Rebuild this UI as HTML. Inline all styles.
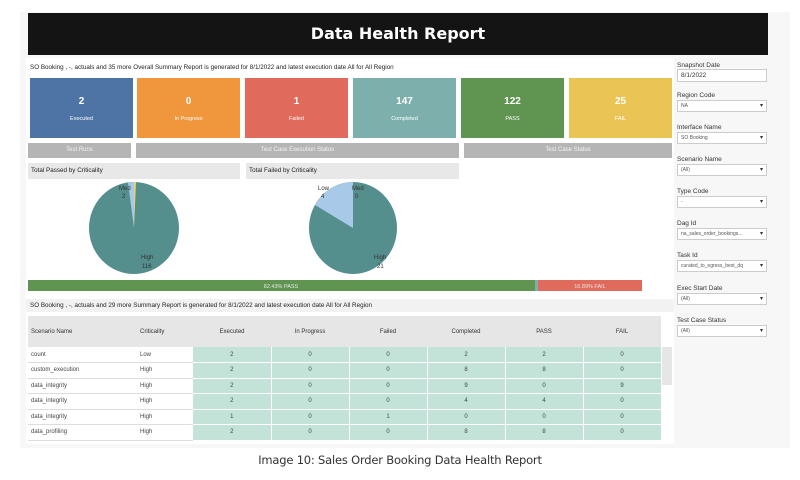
<!DOCTYPE html>
<html><head><meta charset="utf-8"><style>
*{margin:0;padding:0;box-sizing:border-box}
body{width:800px;height:480px;background:#fff;font-family:"Liberation Sans",sans-serif;position:relative;overflow:hidden}
.a{position:absolute}
.panel{left:20px;top:12px;width:770px;height:436px;background:#f7f7f7}
.title{left:28px;top:13px;width:740px;height:42px;background:#141414;color:#fff;font-weight:bold;font-size:16px;text-align:center;line-height:42px;font-family:"DejaVu Sans",sans-serif}
.main{left:26px;top:58px;width:648px;height:386px;background:#fff}
.t7{font-size:6.3px;color:#222}
.kpi{top:78px;height:60px;width:103px;color:#fff;text-align:center}
.kpi b{display:block;font-size:10px;margin-top:18px}
.kpi span{font-size:5.5px}
.lb{top:143px;height:15px;background:#b5b5b5;color:#f4f4f4;font-size:6px;text-align:center;line-height:15px}
.sh{top:163px;height:16px;background:#e8e8e8;font-size:6.3px;line-height:16px;padding-left:3px;color:#222}
.rl{font-size:6.5px;color:#333;left:677px}
.ri{left:677px;width:90px;height:12px;border:1px solid #ccc;background:#fff;font-size:5px;color:#555;padding-left:3px;line-height:10px}
.ri:after{content:"▾";position:absolute;right:3px;top:0;font-size:6px;color:#333}
table{border-collapse:collapse;font-size:6px;color:#444;table-layout:fixed}
td{height:15.5px;border-bottom:1px solid #ddd;padding-left:3px}
th{height:31px;background:#e6e6e6;font-weight:normal;text-align:left;padding-left:3px;color:#333}
td.g,th.c{text-align:center;padding:0}
td.g{background:#c3e3d9;border-right:1px solid #fff;border-bottom:1px solid #fff}
</style></head><body>
<div class="a panel"></div>
<div class="a title">Data Health Report</div>
<div class="a main"></div>
<div class="a t7" style="left:30px;top:64px">SO Booking , -, actuals and 35 more Overall Summary Report is generated for 8/1/2022 and latest execution date All for All Region</div>
<div class="a kpi" style="left:30px;background:#4e74a6"><b>2</b><span>Executed</span></div>
<div class="a kpi" style="left:137px;background:#f0973e"><b>0</b><span>In Progress</span></div>
<div class="a kpi" style="left:245px;background:#e06a5b"><b>1</b><span>Failed</span></div>
<div class="a kpi" style="left:353px;background:#7db0ad"><b>147</b><span>Completed</span></div>
<div class="a kpi" style="left:461px;background:#5f9550"><b>122</b><span>PASS</span></div>
<div class="a kpi" style="left:569px;background:#ebc456"><b>25</b><span>FAIL</span></div>
<div class="a lb" style="left:28px;width:103px">Test Runs</div>
<div class="a lb" style="left:136px;width:323px">Test Case Execution Status</div>
<div class="a lb" style="left:464px;width:208px">Test Case Status</div>
<div class="a sh" style="left:28px;width:212px">Total Passed by Criticality</div>
<div class="a sh" style="left:246px;width:213px">Total Failed by Criticality</div>
<svg class="a" style="left:0;top:0" width="800" height="480">
<ellipse cx="134" cy="228" rx="45" ry="46" fill="#548f8e"/>
<path d="M134 228 L134 182 L128 182.5 Z" fill="#a9c9e8"/>
<path d="M134 228 L134 182 L136 182 Z" fill="#ebd36a"/>
<ellipse cx="353" cy="228" rx="44" ry="46" fill="#548f8e"/>
<path d="M353 228 L353 182 A44 46 0 0 0 315 205 Z" fill="#a9c9e8"/>
<g font-size="6" fill="#333" font-family="Liberation Sans">
<text x="119" y="190">Med</text><text x="122" y="198">2</text>
<text x="141" y="259">High</text><text x="142" y="268">116</text>
<text x="318" y="190">Low</text><text x="321" y="198">4</text>
<text x="352" y="190">Med</text><text x="355" y="198">0</text>
<text x="374" y="259">High</text><text x="377" y="268">21</text>
</g>
<rect x="28" y="280" width="507" height="11" fill="#5f9550"/>
<rect x="535" y="280" width="3" height="11" fill="#7db0ad"/>
<rect x="538" y="280" width="104" height="11" fill="#e06a5b"/>
<g font-size="5.5" fill="#e8e8e8" font-family="Liberation Sans" text-anchor="middle"><text x="281" y="288">82.43% PASS</text><text x="590" y="288">16.89% FAIL</text></g>
</svg>
<div class="a" style="left:26px;top:299px;width:648px;height:13px;background:#f2f2f2"></div>
<div class="a t7" style="left:30px;top:302px">SO Booking , -, actuals and 29 more Summary Report is generated for 8/1/2022 and latest execution date All for All Region</div>
<div class="a" style="left:661px;top:347px;width:11px;height:38px;background:#e6e6e6"></div>
<table class="a" style="left:28px;top:316px;width:633px">
<colgroup><col style="width:109px"><col style="width:56px"><col style="width:78px"><col style="width:78px"><col style="width:78px"><col style="width:78px"><col style="width:78px"><col style="width:78px"></colgroup>
<tr><th>Scenario Name</th><th>Criticality</th><th class="c">Executed</th><th class="c">In Progress</th><th class="c">Failed</th><th class="c">Completed</th><th class="c">PASS</th><th class="c">FAIL</th></tr>
<tr><td>count</td><td>Low</td><td class="g">2</td><td class="g">0</td><td class="g">0</td><td class="g">2</td><td class="g">2</td><td class="g">0</td></tr>
<tr><td>custom_execution</td><td>High</td><td class="g">2</td><td class="g">0</td><td class="g">0</td><td class="g">8</td><td class="g">8</td><td class="g">0</td></tr>
<tr><td>data_integrity</td><td>High</td><td class="g">2</td><td class="g">0</td><td class="g">0</td><td class="g">9</td><td class="g">0</td><td class="g">9</td></tr>
<tr><td>data_integrity</td><td>High</td><td class="g">2</td><td class="g">0</td><td class="g">0</td><td class="g">4</td><td class="g">4</td><td class="g">0</td></tr>
<tr><td>data_integrity</td><td>High</td><td class="g">1</td><td class="g">0</td><td class="g">1</td><td class="g">0</td><td class="g">0</td><td class="g">0</td></tr>
<tr><td>data_profiling</td><td>High</td><td class="g">2</td><td class="g">0</td><td class="g">0</td><td class="g">8</td><td class="g">8</td><td class="g">0</td></tr>
</table>
<div class="a rl" style="top:62px">Snapshot Date</div>
<div class="a" style="left:677px;top:69px;width:90px;height:13px;border:1px solid #ccc;background:#fff;font-size:6.5px;padding-left:3px;line-height:11px;color:#333">8/1/2022</div>
<div class="a rl" style="top:92px">Region Code</div><div class="a ri" style="top:100px">NA</div>
<div class="a rl" style="top:124px">Interface Name</div><div class="a ri" style="top:132px">SO Booking</div>
<div class="a rl" style="top:156px">Scenario Name</div><div class="a ri" style="top:164px">(All)</div>
<div class="a rl" style="top:188px">Type Code</div><div class="a ri" style="top:196px">-</div>
<div class="a rl" style="top:220px">Dag Id</div><div class="a ri" style="top:228px">na_sales_order_bookings...</div>
<div class="a rl" style="top:252px">Task Id</div><div class="a ri" style="top:260px">curated_to_egress_best_dq</div>
<div class="a rl" style="top:285px">Exec Start Date</div><div class="a ri" style="top:293px">(All)</div>
<div class="a rl" style="top:317px">Test Case Status</div><div class="a ri" style="top:325px">(All)</div>
<div class="a" style="left:0;top:453px;width:800px;text-align:center;font-size:11.5px;color:#333;font-family:'DejaVu Sans',sans-serif;letter-spacing:-0.2px">Image 10: Sales Order Booking Data Health Report</div>
</body></html>
